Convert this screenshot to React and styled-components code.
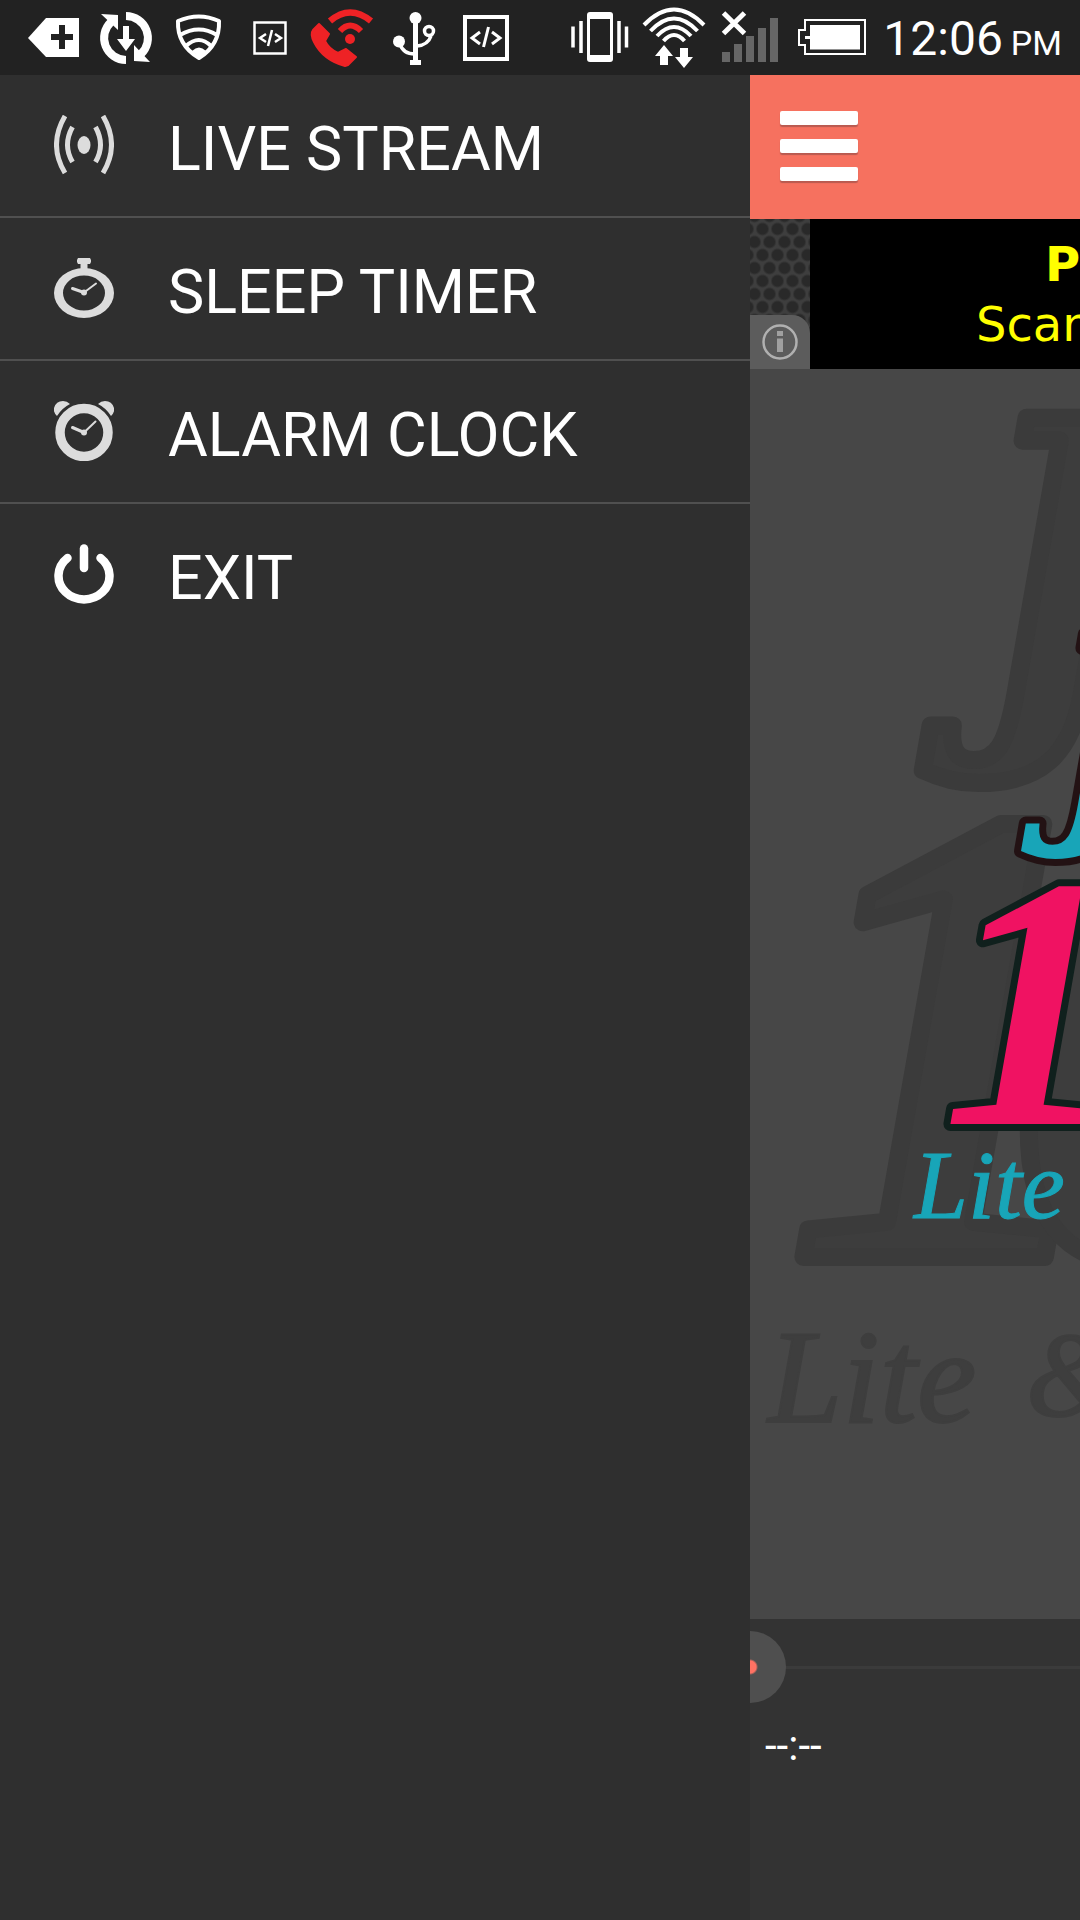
import React, { useState } from "react";
import styled, { createGlobalStyle } from "styled-components";

const GlobalStyle = createGlobalStyle`
  * {
    box-sizing: border-box;
  }
  body {
    margin: 0;
    background: #333333;
    font-family: Roboto, "Liberation Sans", sans-serif;
    color: #ffffff;
  }
  button {
    font: inherit;
    color: inherit;
    border: none;
    padding: 0;
    background: none;
    cursor: pointer;
  }
`;

const Page = styled.div`
  display: flex;
  flex-direction: column;
  min-height: 100vh;
  overflow: hidden;
`;

const StatusBar = styled.header`
  display: flex;
  justify-content: space-between;
  height: 75px;
  padding: 0 18px;
  background: #222222;
`;

const StatusGroup = styled.div`
  display: flex;
`;

const Glyph = styled.svg`
  display: block;
  flex: none;
  height: 75px;
`;

const Clock = styled.time`
  margin-left: 14px;
  font-size: 48px;
  line-height: 78px;
  white-space: nowrap;
`;

const Meridiem = styled.span`
  margin-left: 8px;
  font-size: 34px;
`;

const Body = styled.div`
  flex: 1;
  display: grid;
  grid-template-columns: 25fr 11fr;
`;

const Drawer = styled.nav`
  z-index: 1;
  background: #2f2f2f;
`;

const Menu = styled.ul`
  margin: 0;
  padding: 0;
  list-style: none;
`;

const MenuItem = styled.li`
  border-bottom: 2px solid #505050;

  &:last-child {
    border-bottom: none;
  }
`;

const MenuButton = styled.button`
  display: flex;
  align-items: center;
  gap: 54px;
  width: 100%;
  height: 141px;
  padding: 0 54px 1px;
  text-align: left;
`;

const MenuIcon = styled.svg`
  display: block;
  flex: none;
  width: 60px;
  height: 60px;
  color: ${(props) => props.$color};
`;

const MenuLabel = styled.span`
  padding-top: 8px;
  font-size: 61px;
  line-height: 72px;
  white-space: nowrap;
`;

const Content = styled.main`
  display: flex;
  flex-direction: column;
  min-width: 0;
  overflow: hidden;
`;

const AppBar = styled.div`
  display: flex;
  align-items: center;
  height: 144px;
  padding: 0 30px 2px;
  background: #f6715f;
`;

const MenuToggle = styled.button`
  display: flex;
  flex-direction: column;
  gap: 14px;
  width: 78px;
`;

const Bar = styled.span`
  height: 14px;
  border-radius: 2px;
  background: #ffffff;
  box-shadow: 0 2px 1px #b95a50;
`;

const Ad = styled.section`
  display: flex;
  height: 150px;
  background: #000000;
`;

const AdSide = styled.div`
  display: flex;
  align-items: flex-end;
  flex: none;
  width: 60px;
  background-color: #3e3e3e;
  background-image: radial-gradient(circle, #292929 5px, transparent 7px),
    radial-gradient(circle, #292929 5px, transparent 7px);
  background-size: 15px 26px;
  background-position: 5px -3px, 12px 10px;
`;

const InfoButton = styled.button`
  display: flex;
  align-items: center;
  justify-content: center;
  width: 60px;
  height: 54px;
  border-radius: 0 18px 0 0;
  background: #5c5c5c;
`;

const AdText = styled.div`
  flex: 1;
  min-width: 0;
  overflow: hidden;
  padding: 15px 0 0 166px;
  font-family: "DejaVu Sans", sans-serif;
  font-size: 48px;
  line-height: 60px;
  color: #ffff00;
  white-space: nowrap;
`;

const AdTitle = styled.strong`
  display: block;
  padding-left: 69px;
`;

const Stage = styled.section`
  flex: 1;
  min-height: 800px;
  overflow: hidden;
  background: #474747;
`;

const Artwork = styled.svg`
  display: block;
  width: 330px;
  height: 1250px;
  overflow: visible;
  font-family: "Liberation Serif", serif;
  font-style: italic;
`;

const Player = styled.section`
  height: 301px;
  background: #333333;
`;

const Seek = styled.input`
  appearance: none;
  display: block;
  width: calc(100% + 72px);
  height: 96px;
  margin: 0 0 0 -36px;
  background: linear-gradient(#3b3b3b, #3b3b3b) center / 100% 3px no-repeat;

  &::-webkit-slider-thumb {
    appearance: none;
    width: 72px;
    height: 72px;
    border-radius: 50%;
    background: radial-gradient(circle, #ff7263 6px, #4f4f4f 8px);
  }
`;

const Elapsed = styled.div`
  padding: 7px 15px;
  font-size: 42px;
  line-height: 48px;
`;

const BackPlusIcon = () => (
  <Glyph width="72" viewBox="18 0 72 75">
    <path d="M28 38L46 18H79V57H46Z" fill="#fff" />
    <path d="M62 25V49M51 37H73" stroke="#222" strokeWidth="6" />
  </Glyph>
);

const SyncIcon = () => (
  <Glyph width="72" viewBox="90 0 72 75">
    <g fill="none" stroke="#fff" strokeWidth="8">
      <path d="M126 60A22 22 0 0 1 111 22" />
      <path d="M126 16A22 22 0 0 1 141 54" />
    </g>
    <path
      d="M101 14L118 15V30ZM134 45L150 62L134 61ZM123 26H129V39H135L126 51L117 39H123Z"
      fill="#fff"
    />
  </Glyph>
);

const ShieldIcon = () => (
  <Glyph width="72" viewBox="162 0 72 75">
    <g fill="none" stroke="#fff" strokeWidth="4" strokeLinejoin="round">
      <path d="M178 21Q199 12 219 21Q220 45 199 58Q177 45 178 21Z" />
      <path d="M180 35Q199 24 217 35" />
      <path d="M186 46Q199 34 211 46" />
    </g>
    <path d="M192 51Q199 44 206 51L199 57Z" fill="#fff" />
  </Glyph>
);

const CodeSmallIcon = () => (
  <Glyph width="72" viewBox="234 0 72 75">
    <g fill="none" stroke="#fff" strokeWidth="2.5">
      <rect x="254.500" y="22.500" width="31" height="31" />
      <path d="M266 34L260 38L266 42M272 30L268 46M275 34L281 38L275 42" />
    </g>
  </Glyph>
);

const CallIcon = () => (
  <Glyph width="72" viewBox="306 0 72 75">
    <g fill="#ee2225" stroke="#ee2225" strokeLinejoin="round">
      <path
        d="M319 24L313 30Q310 34 314 42Q323 60 345 66L348 65L356 57L346 49L338 53Q329 49 325 41L329 34Z"
        strokeWidth="2"
      />
      <path d="M330 21Q350 4 371 21" fill="none" strokeWidth="6.500" />
      <path d="M340 31Q350 20 361 31" fill="none" strokeWidth="6" />
      <circle cx="350" cy="39" r="5" stroke="none" />
    </g>
  </Glyph>
);

const UsbIcon = () => (
  <Glyph width="72" viewBox="378 0 72 75">
    <g fill="#fff">
      <circle cx="415.500" cy="18" r="6" />
      <circle cx="399" cy="41.500" r="6" />
      <path d="M413 17H418V60H421V65H410V60H413Z" />
    </g>
    <g fill="none" stroke="#fff" strokeWidth="3.500">
      <path d="M400 44Q403 54 415 54M431 36Q428 45 417 46" />
      <circle cx="429" cy="31" r="4.500" />
    </g>
  </Glyph>
);

const CodeIcon = () => (
  <Glyph width="72" viewBox="450 0 72 75">
    <g fill="none" stroke="#fff">
      <rect x="465" y="17" width="42" height="42" strokeWidth="4" />
      <path
        d="M480 32L472 38L480 44M488.500 27L483.500 47M492 32L500 38L492 44"
        strokeWidth="3"
      />
    </g>
  </Glyph>
);

const VibrateIcon = () => (
  <Glyph width="74" viewBox="563 0 74 75">
    <rect x="587" y="12" width="26" height="50" rx="3" fill="#fff" />
    <rect x="590" y="19" width="20" height="36" fill="#222" />
    <path
      d="M573 26.500V47.500M581 21V53M619 21V53M626.500 26.500V47.500"
      stroke="#fff"
      strokeWidth="3.500"
    />
  </Glyph>
);

const WifiIcon = () => (
  <Glyph width="74" viewBox="637 0 74 75">
    <g fill="none" stroke="#fff" strokeWidth="4">
      <path d="M644 25Q674 -6 704 25" />
      <path d="M650.500 31Q674 6 697.500 31" />
      <path d="M657 36Q674 18 691 36" />
      <path d="M663.500 41Q674 29 684.500 41" />
    </g>
    <path
      d="M655 56L664 45L673 56H668V65H660V56ZM680 48H688V57H693L684 68L675 57H680Z"
      fill="#fff"
    />
  </Glyph>
);

const signalBars = [52, 44, 36, 28, 18];

const SignalIcon = () => (
  <Glyph width="78" viewBox="711 0 78 75">
    {signalBars.map((top, i) => (
      <rect key={top} x={722 + i * 12} y={top} width="8" height={62 - top} fill="#666" />
    ))}
    <path d="M723.500 13L744.500 33.500M744.500 13L723.500 33.500" stroke="#fff" strokeWidth="5" />
  </Glyph>
);

const BatteryIcon = () => (
  <Glyph width="80" viewBox="789 0 80 75">
    <path
      d="M805 20H865V54H805V45H799V30H805Z"
      fill="none"
      stroke="#fff"
      strokeWidth="2"
    />
    <path d="M810 25H860V49.500H810V39H805V36H810Z" fill="#fff" />
  </Glyph>
);

const LiveIcon = (
  <g fill="none" stroke="currentColor" strokeWidth="5">
    <path d="M11 1Q-6 30 11 58M49 1Q66 30 49 58" />
    <path d="M18.500 12Q8.500 30 18.500 47M41.500 12Q51.500 30 41.500 47" />
    <ellipse cx="30" cy="30" rx="6.500" ry="9" fill="currentColor" stroke="none" />
  </g>
);

const TimerIcon = (
  <g fill="currentColor">
    <path
      fillRule="evenodd"
      d="M0 35A30 25 0 0 1 60 35A30 25 0 0 1 0 35ZM9 35A21 17.500 0 0 0 51 35A21 17.500 0 0 0 9 35Z"
    />
    <path d="M24 0H36L37 2V4L36 6H33.500V12H26.500V6H24L23 4V2Z" />
    <circle cx="30" cy="34.500" r="3" />
    <path d="M18.500 30.500L30 34.500" stroke="currentColor" strokeWidth="3" strokeLinecap="round" />
    <path d="M30 34.500L42 25.500" stroke="currentColor" strokeWidth="2" strokeLinecap="round" />
  </g>
);

const AlarmIcon = (
  <g fill="currentColor">
    <circle cx="30" cy="31.500" r="24" fill="none" stroke="currentColor" strokeWidth="9.500" />
    <path d="M3 15Q-1 11 0 7Q2 0 9 0Q13 0 16 3Q8 7 3 15Z" />
    <path d="M57 15Q61 11 60 7Q58 0 51 0Q47 0 44 3Q52 7 57 15Z" />
    <circle cx="30" cy="31.500" r="3" />
    <path d="M18.500 26.500L30 31.500" stroke="currentColor" strokeWidth="3" strokeLinecap="round" />
    <path d="M30 31.500L41.500 20.500" stroke="currentColor" strokeWidth="2" strokeLinecap="round" />
  </g>
);

const PowerIcon = (
  <g fill="none" stroke="currentColor" strokeWidth="8.500" strokeLinecap="round">
    <path d="M30 4.500V24" />
    <path d="M13.500 14A25.500 23.500 0 1 0 46.500 14" />
  </g>
);

const menuItems = [
  { label: "LIVE STREAM", icon: LiveIcon, color: "#dcdcdc" },
  { label: "SLEEP TIMER", icon: TimerIcon, color: "#dcdcdc" },
  { label: "ALARM CLOCK", icon: AlarmIcon, color: "#dcdcdc" },
  { label: "EXIT", icon: PowerIcon, color: "#ffffff" },
];

const slab = '"DejaVu Serif Condensed", "DejaVu Serif", serif';

const StationLogo = () => (
  <Artwork viewBox="750 369 330 1250">
    {/* faded copy behind */}
    <g fill="#3d3d3d" stroke="#3b3b3b" strokeWidth="18" strokeLinejoin="round" fontWeight="bold">
      <text x="978" y="702" fontSize="390" fontFamily={slab}>J</text>
      <text x="788" y="1257" fontSize="656">1</text>
      <text x="1006" y="1257" fontSize="656">0</text>
    </g>
    <g fill="#3e3e3e" stroke="#3e3e3e" strokeWidth="2">
      <text x="768" y="1422" fontSize="134">Lite</text>
      <text x="1026" y="1416" fontSize="120">&amp;</text>
    </g>
    <g strokeLinejoin="round" fontWeight="bold" paintOrder="stroke">
      <text x="1055" y="809" fontSize="240" fontFamily={slab} fill="#18a5b8" stroke="#231214" strokeWidth="14">J</text>
      <text x="942" y="1124" fontSize="360" fill="#f01262" stroke="#10201d" strokeWidth="14">1</text>
    </g>
    <text x="914" y="1218" fontSize="97" fill="#18a5b8" stroke="#18a5b8">Lite</text>
  </Artwork>
);

export default function App() {
  const [position, setPosition] = useState(0);

  return (
    <>
      <GlobalStyle />
      <Page>
        <StatusBar>
          <StatusGroup>
            <BackPlusIcon />
            <SyncIcon />
            <ShieldIcon />
            <CodeSmallIcon />
            <CallIcon />
            <UsbIcon />
            <CodeIcon />
          </StatusGroup>
          <StatusGroup>
            <VibrateIcon />
            <WifiIcon />
            <SignalIcon />
            <BatteryIcon />
            <Clock>
              12:06<Meridiem>PM</Meridiem>
            </Clock>
          </StatusGroup>
        </StatusBar>
        <Body>
          <Drawer>
            <Menu>
              {menuItems.map((item) => (
                <MenuItem key={item.label}>
                  <MenuButton type="button">
                    <MenuIcon viewBox="0 0 60 60" $color={item.color}>
                      {item.icon}
                    </MenuIcon>
                    <MenuLabel>{item.label}</MenuLabel>
                  </MenuButton>
                </MenuItem>
              ))}
            </Menu>
          </Drawer>
          <Content>
            <AppBar>
              <MenuToggle type="button" aria-label="Menu">
                <Bar />
                <Bar />
                <Bar />
              </MenuToggle>
            </AppBar>
            <Ad>
              <AdSide>
                <InfoButton type="button" aria-label="About this ad">
                  <svg width="36" height="36" viewBox="0 0 36 36">
                    <circle cx="18" cy="18" r="16.500" fill="none" stroke="#b0b0b0" strokeWidth="2.5" />
                    <path d="M18 7V12M18 14.500V28" stroke="#a0a0a0" strokeWidth="6" />
                  </svg>
                </InfoButton>
              </AdSide>
              <AdText>
                <AdTitle>P</AdTitle>
                Scan
              </AdText>
            </Ad>
            <Stage>
              <StationLogo />
            </Stage>
            <Player>
              <Seek
                type="range"
                aria-label="Position"
                min="0"
                max="100"
                value={position}
                onChange={(e) => setPosition(e.target.value)}
              />
              <Elapsed>--:--</Elapsed>
            </Player>
          </Content>
        </Body>
      </Page>
    </>
  );
}
